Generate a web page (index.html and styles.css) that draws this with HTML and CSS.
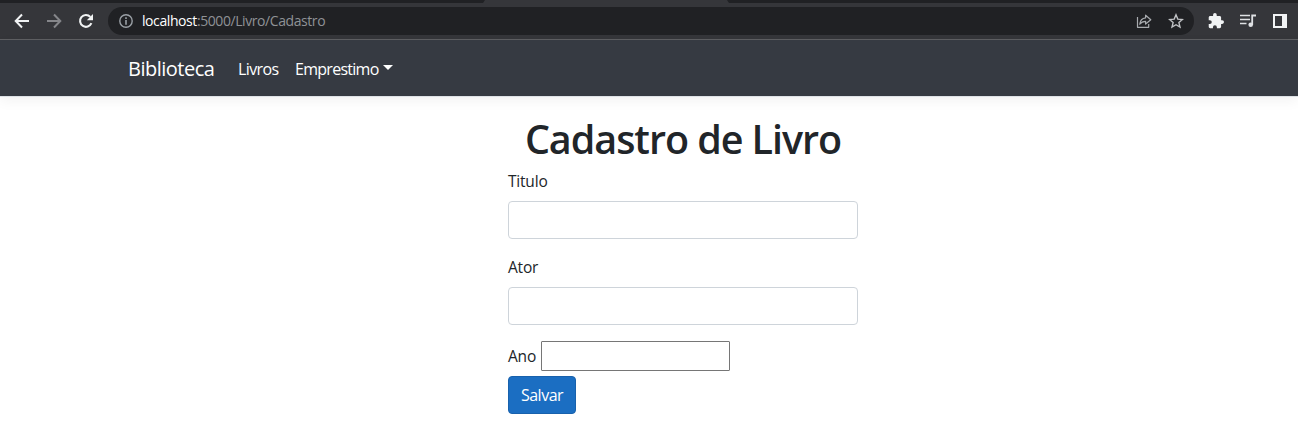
FILE: index.html
```
<!DOCTYPE html>
<html lang="pt-BR">
<head>
<meta charset="utf-8">
<title>Cadastro de Livro</title>
<link rel="stylesheet" href="styles.css">
</head>
<body>
<div class="tabstrip"><div class="tab-active"></div></div>
<div class="toolbar">
  <svg class="icon back" viewBox="0 0 16 16"><path d="M15 8H2M8 1.5L1.7 8L8 14.5" fill="none" stroke="#f1f3f4" stroke-width="2"/></svg>
  <svg class="icon forward" viewBox="0 0 16 16"><path d="M1 8H14M8 1.5L14.3 8L8 14.5" fill="none" stroke="#85868a" stroke-width="2"/></svg>
  <svg class="icon reload" viewBox="0 0 16 16"><path d="M13.4 10.2A5.9 5.9 0 1 1 12.3 3.9" fill="none" stroke="#f1f3f4" stroke-width="2.1"/><path d="M15 1v6.2H8.8z" fill="#f1f3f4"/></svg>
  <div class="address">
    <svg class="icon info" viewBox="0 0 16 16"><circle cx="8" cy="8" r="6.2" fill="none" stroke="#9aa0a6" stroke-width="1.4"/><path d="M7.2 4.3h1.6v1.6H7.2zM7.2 7h1.6v4.8H7.2z" fill="#9aa0a6"/></svg>
    <span class="url"><span class="host">localhost</span>:5000/Livro/Cadastro</span>
    <svg class="icon share" viewBox="0 0 16 16"><path d="M1.5 4v10.3h11.2v-3.2M9.6 2.2L14.8 6.7L9.6 11V8.3C6.7 8.3 5.1 9.2 3.7 11.2C4.1 7.6 6 5.2 9.6 4.8z" fill="none" stroke="#a8abaf" stroke-width="1.2" stroke-linejoin="round"/></svg>
    <svg class="icon star" viewBox="0 0 16 16"><path d="M8 1.8L9.8 6.1L14.4 6.5L10.9 9.6L12 14.1L8 11.7L4 14.1L5.1 9.6L1.6 6.5L6.2 6.1z" fill="none" stroke="#c0c2c5" stroke-width="1.4"/></svg>
  </div>
  <svg class="icon puzzle" viewBox="1 1 22 22"><path d="M20.5 11H19V7c0-1.100-.9-2-2-2h-4V3.500a2.500 2.500 0 0 0-5 0V5H4c-1.100 0-2 .9-2 2v3.800h1.500a2.700 2.700 0 0 1 0 5.400H2V20c0 1.100.9 2 2 2h3.800v-1.500a2.700 2.700 0 0 1 5.400 0V22H17c1.100 0 2-.9 2-2v-4h1.500a2.500 2.500 0 0 0 0-5z" fill="#f1f3f4"/></svg>
  <svg class="icon media" viewBox="0 0 16 16"><path d="M0 2.500h10M0 6.500h10M0 10.500h6.500" stroke="#dfe1e4" stroke-width="1.500"/><path d="M12.200 12V2.500H16" fill="none" stroke="#dfe1e4" stroke-width="1.800"/><circle cx="10.700" cy="11.700" r="2.300" fill="#dfe1e4"/></svg>
  <svg class="icon panel" viewBox="0 0 14 14"><path d="M0 0h14v14H0zM2 2v10h7V2z" fill="#f1f3f4" fill-rule="evenodd"/></svg>
</div>
<nav class="navbar">
  <a class="brand">Biblioteca</a>
  <a class="nav-link livros">Livros</a>
  <a class="nav-link dropdown">Emprestimo</a>
</nav>
<main class="content">
  <h1 class="title">Cadastro de Livro</h1>
  <form class="form">
    <label class="label titulo" for="titulo">Titulo</label>
    <input class="control" id="titulo" type="text">
    <label class="label ator" for="ator">Ator</label>
    <input class="control" id="ator" type="text">
    <div class="year"><label class="ano" for="ano">Ano</label><input class="year-input" id="ano" type="text"></div>
    <button class="save" type="button"><span>Salvar</span></button>
  </form>
</main>
</body>
</html>
```
FILE: styles.css
```
* { box-sizing: border-box; }
body { margin: 0; height: 442px; overflow: hidden; background: #fff; color: #212529; font: 16px/24px "Open Sans", "Noto Sans", sans-serif; }
.tabstrip { height: 3px; background: #202124; }
.tab-active { width: 246px; height: 3px; margin-left: 483px; background: #35363a; clip-path: polygon(2px 0, 244px 0, 100% 100%, 0 100%); }
.toolbar { display: flex; align-items: center; height: 37px; background: #35363a; border-bottom: 1px solid #5f6063; }
.icon { display: block; flex: none; width: 16px; height: 16px; }
.back { margin-left: 14px; }
.forward { margin-left: 16px; }
.reload { margin-left: 16px; }
.address { display: flex; align-items: center; width: 1086px; height: 28px; margin-left: 14px; padding: 0 10px; border-radius: 14px; background: #202124; }
.url { margin: 0 auto 0 8px; color: #8f9296; font-size: 14px; line-height: 20px; letter-spacing: -0.42px; white-space: nowrap; }
.host { color: #fff; }
.star { margin-left: 16px; }
.puzzle { margin-left: 14px; }
.media { margin-left: 16px; }
.panel { width: 14px; height: 14px; margin-left: 17px; }
.navbar { display: flex; align-items: center; height: 57px; padding: 2px 0 0 128px; background: #363a42; color: #fff; border-bottom: 1px solid #dee2e6; box-shadow: 0 4px 12px rgba(0, 0, 0, .05); }
.brand { width: 110px; font-size: 20px; line-height: 30px; letter-spacing: -0.5px; }
.nav-link { letter-spacing: -0.6px; }
.livros { width: 57px; }
.dropdown { display: flex; align-items: center; letter-spacing: -0.72px; }
.dropdown::after { content: ""; margin: -4px 0 0 4px; border: 5px solid transparent; border-top-color: #fff; border-bottom: 0; }
.content { width: 350px; margin: 18px 0 0 508px; }
.title { height: 48px; margin: 0 0 6px; font-size: 39.5px; font-weight: 600; line-height: 48px; letter-spacing: -1.05px; text-align: center; white-space: nowrap; }
.form { display: flex; flex-direction: column; align-items: flex-start; }
.label { margin-bottom: 8px; font-size: 15.5px; letter-spacing: -0.2px; }
.control { width: 350px; height: 38px; margin: 0 0 16px; padding: 6px 12px; border: 1px solid #ced4da; border-radius: 4px; font: inherit; }
.year { display: flex; align-items: center; height: 30px; margin-bottom: 5px; }
.ano { width: 33px; font-size: 15.5px; letter-spacing: -0.2px; }
.year-input { width: 189px; height: 30px; border: 1px solid #767676; border-radius: 1px; background: #fff; }
.save { width: 68px; height: 38px; padding: 0; border: 1px solid #1861ac; border-radius: 4px; background: #1b6ec2; color: #fff; font: inherit; letter-spacing: -0.5px; }
```
